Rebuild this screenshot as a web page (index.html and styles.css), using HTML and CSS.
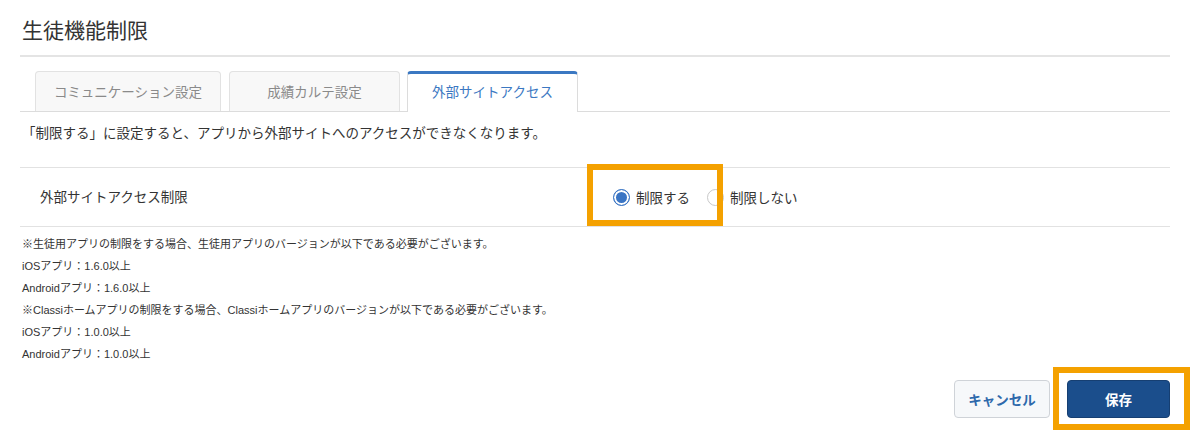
FILE: index.html
```html
<!DOCTYPE html>
<html lang="ja">
<head>
<meta charset="utf-8">
<title>生徒機能制限</title>
<link rel="stylesheet" href="styles.css">
</head>
<body>

<div class="page">
	<h1 class="page_title">生徒機能制限</h1>

	<ul class="tabs">
		<li class="tab tab_wide">コミュニケーション設定</li>
		<li class="tab">成績カルテ設定</li>
		<li class="tab tab_active">外部サイトアクセス</li>
	</ul>

	<p class="lead">「制限する」に設定すると、アプリから外部サイトへのアクセスができなくなります。</p>

	<div class="setting_row">
		<div class="setting_label">外部サイトアクセス制限</div>
		<div class="radio_group">
			<label class="radio_item"><span class="radio radio_checked"></span>制限する</label>
			<label class="radio_item"><span class="radio"></span>制限しない</label>
		</div>
	</div>

	<div class="notes">
		<p>※生徒用アプリの制限をする場合、生徒用アプリのバージョンが以下である必要がございます。</p>
		<p>iOSアプリ：1.6.0以上</p>
		<p>Androidアプリ：1.6.0以上</p>
		<p>※Classiホームアプリの制限をする場合、Classiホームアプリのバージョンが以下である必要がございます。</p>
		<p>iOSアプリ：1.0.0以上</p>
		<p>Androidアプリ：1.0.0以上</p>
	</div>

	<div class="actions">
		<button type="button" class="btn btn_cancel">キャンセル</button>
		<button type="button" class="btn btn_save">保存</button>
	</div>

	<!-- annotation frames -->
	<div class="mark mark_radio"></div>
	<div class="mark mark_save"></div>
</div>

</body>
</html>
```

FILE: styles.css
```css
html, body {
	height: 100%;
	overflow: hidden;
}

body {
	margin: 0;
	color: #333;
	background: #fff;
	font-family: "Liberation Sans", "Noto Sans CJK JP", sans-serif;
}

.page {
	position: relative;
	width: 1150px;
	padding: 16px 0 0 20px;
}

.page_title {
	margin: 0;
	padding: 0 0 9px 2px;
	font-size: 21px;
	font-weight: normal;
	line-height: 30px;
	border-bottom: 2px solid #e4e4e4;
}

.tabs {
	display: flex;
	margin: 14px 0 0;
	padding: 0 0 0 15px;
	list-style: none;
	border-bottom: 1px solid #dcdcdc;
}

.tab {
	box-sizing: border-box;
	min-width: 171px;
	height: 40px;
	margin: 0 7px -1px 0;
	padding: 0 15px;
	color: #8a8a8a;
	font-size: 13.5px;
	line-height: 41px;
	text-align: center;
	background: #f8f8f8;
	border: 1px solid #e2e2e2;
	border-bottom: none;
	border-radius: 4px 4px 0 0;
}

.tab_wide {
	width: 186px;
	margin-right: 8px;
}

.tab_active {
	height: 41px;
	color: #3b78c2;
	line-height: 38px;
	background: #fff;
	border-top: 3px solid #3b78c2;
	border-color: #3b78c2 #dcdcdc #fff;
}

.lead {
	margin: 0;
	padding: 12px 0 0 2px;
	height: 43px;
	font-size: 13.5px;
	line-height: 20px;
	border-bottom: 1px solid #e2e2e2;
}

.setting_row {
	display: grid;
	grid-template-columns: 573px 1fr;
	align-items: center;
	height: 58px;
	padding-left: 20px;
	border-bottom: 1px solid #e2e2e2;
	font-size: 13.5px;
}

.setting_label {
	padding-bottom: 3px;
}

.radio_group {
	display: flex;
	align-items: center;
}

.radio_item {
	display: flex;
	align-items: center;
	margin-right: 17px;
}

.radio {
	box-sizing: border-box;
	width: 17px;
	height: 17px;
	margin-right: 6px;
	border: 1px solid #c8c8c8;
	border-radius: 50%;
	background: #fff;
}

.radio_checked {
	border: 1px solid #3a75c4;
	background: #3a75c4;
	box-shadow: inset 0 0 0 2px #fff;
}

.notes {
	padding: 6px 0 0 2px;
	font-size: 11px;
}

.notes p {
	margin: 0;
	line-height: 22px;
}

.actions {
	display: flex;
	justify-content: flex-end;
	gap: 17px;
	margin-top: 15px;
}

.btn {
	height: 38px;
	font-family: inherit;
	font-size: 13.5px;
	font-weight: bold;
	border-radius: 4px;
}

.btn_cancel {
	width: 96px;
	color: #2e69ab;
	background: #f6f8fa;
	border: 1px solid #cfd3d8;
}

.btn_save {
	width: 103px;
	color: #fff;
	background: #1b4e8c;
	border: 1px solid #163f72;
}

.mark {
	position: absolute;
	box-sizing: border-box;
	border: 6px solid #f4a100;
}

.mark_radio {
	left: 587px;
	top: 164px;
	width: 136px;
	height: 62px;
}

.mark_save {
	left: 1053px;
	top: 367px;
	width: 137px;
	height: 63px;
}
```
